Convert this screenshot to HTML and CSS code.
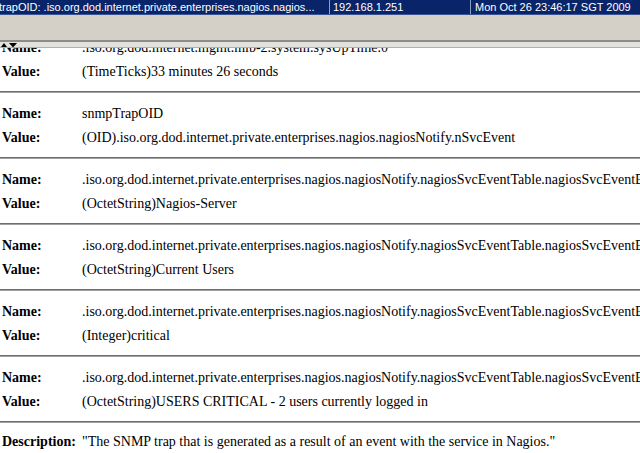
FILE: index.html
```html
<!DOCTYPE html>
<html lang="en">
  <head>
    <meta charset="UTF-8" />
    <title>Trap Details</title>
    <link rel="stylesheet" href="styles.css">
  </head>
  <body>
    <!-- selected trap row -->
    <div class="trap-row">
      <div class="cell cell-oid">trapOID: .iso.org.dod.internet.private.enterprises.nagios.nagios...</div>
      <div class="cell cell-host">192.168.1.251</div>
      <div class="cell cell-time">Mon Oct 26 23:46:17 SGT 2009</div>
    </div>

    <div class="toolbar"></div>

    <!-- splitter -->
    <div class="splitter">
      <svg class="arrows" width="18" height="6" viewBox="0 0 18 6">
        <polygon points="1,5 4,1 7,5" fill="#000" />
        <polygon points="9,1 17,1 13,5.5" fill="#000" />
      </svg>
    </div>

    <!-- details -->
    <div class="details">
      <div class="details-inner">
        <div class="field">
          <div class="row"><span class="label">Name:</span><span class="value">.iso.org.dod.internet.mgmt.mib-2.system.sysUpTime.0</span></div>
          <div class="row"><span class="label">Value:</span><span class="value">(TimeTicks)33 minutes 26 seconds</span></div>
        </div>
        <hr class="divider">
        <div class="field">
          <div class="row"><span class="label">Name:</span><span class="value">snmpTrapOID</span></div>
          <div class="row"><span class="label">Value:</span><span class="value">(OID).iso.org.dod.internet.private.enterprises.nagios.nagiosNotify.nSvcEvent</span></div>
        </div>
        <hr class="divider">
        <div class="field">
          <div class="row"><span class="label">Name:</span><span class="value">.iso.org.dod.internet.private.enterprises.nagios.nagiosNotify.nagiosSvcEventTable.nagiosSvcEventEntry.nSvcHostname</span></div>
          <div class="row"><span class="label">Value:</span><span class="value">(OctetString)Nagios-Server</span></div>
        </div>
        <hr class="divider">
        <div class="field">
          <div class="row"><span class="label">Name:</span><span class="value">.iso.org.dod.internet.private.enterprises.nagios.nagiosNotify.nagiosSvcEventTable.nagiosSvcEventEntry.nSvcDesc</span></div>
          <div class="row"><span class="label">Value:</span><span class="value">(OctetString)Current Users</span></div>
        </div>
        <hr class="divider">
        <div class="field">
          <div class="row"><span class="label">Name:</span><span class="value">.iso.org.dod.internet.private.enterprises.nagios.nagiosNotify.nagiosSvcEventTable.nagiosSvcEventEntry.nSvcStateID</span></div>
          <div class="row"><span class="label">Value:</span><span class="value">(Integer)critical</span></div>
        </div>
        <hr class="divider">
        <div class="field">
          <div class="row"><span class="label">Name:</span><span class="value">.iso.org.dod.internet.private.enterprises.nagios.nagiosNotify.nagiosSvcEventTable.nagiosSvcEventEntry.nSvcOutput</span></div>
          <div class="row"><span class="label">Value:</span><span class="value">(OctetString)USERS CRITICAL - 2 users currently logged in</span></div>
        </div>
        <hr class="divider last">
        <div class="field">
          <div class="row"><span class="label">Description:</span><span class="value desc">"The SNMP trap that is generated as a result of an event with the service in Nagios."</span></div>
        </div>
      </div>
    </div>
  </body>
</html>
```

FILE: styles.css
```css
* {
  margin: 0;
  padding: 0;
  box-sizing: border-box;
}

body {
  width: 640px;
  height: 453px;
  overflow: hidden;
  background: #ffffff;
  color: #000000;
}

/* selected trap row */
.trap-row {
  display: flex;
  height: 15px;
  background: #0a246a;
  color: #ffffff;
  font-family: "Liberation Sans", "DejaVu Sans", sans-serif;
  font-size: 11px;
  line-height: 14px;
  border-bottom: 1px solid #3a5494;
}

.cell {
  white-space: nowrap;
  overflow: hidden;
  padding-left: 1px;
}

.cell-oid {
  width: 331px;
  margin-left: -2px;
}

.cell-host {
  width: 141px;
  padding-left: 3px;
  border-left: 1px solid #8a9cc8;
}

.cell-time {
  flex: 1;
  padding-left: 4px;
  border-left: 1px solid #8a9cc8;
}

.toolbar {
  height: 25px;
  background: #d4d0c8;
}

/* splitter */
.splitter {
  height: 8px;
  background: #e4e2dc;
  border-top: 2px solid #8c8c8c;
  border-bottom: 1px solid #b0b0b0;
  position: relative;
  z-index: 1;
}

.arrows {
  display: block;
}

/* details */
.details {
  height: 405px;
  overflow: hidden;
  font-family: "Liberation Serif", "Times New Roman", serif;
  font-size: 14px;
}

.details-inner {
  margin-top: -12px;
}

.field {
  padding: 0 0 0 2px;
}

.row {
  display: flex;
  height: 24px;
  line-height: 24px;
  white-space: nowrap;
}

.label {
  width: 80px;
  flex-shrink: 0;
  font-weight: bold;
}

.divider {
  border: 0;
  height: 2px;
  margin: 7px 0 9px;
  border-top: 1px solid #6e6e6e;
  border-bottom: 1px solid #a0a0a0;
}

.divider.last {
  margin-bottom: 7px;
}
```
